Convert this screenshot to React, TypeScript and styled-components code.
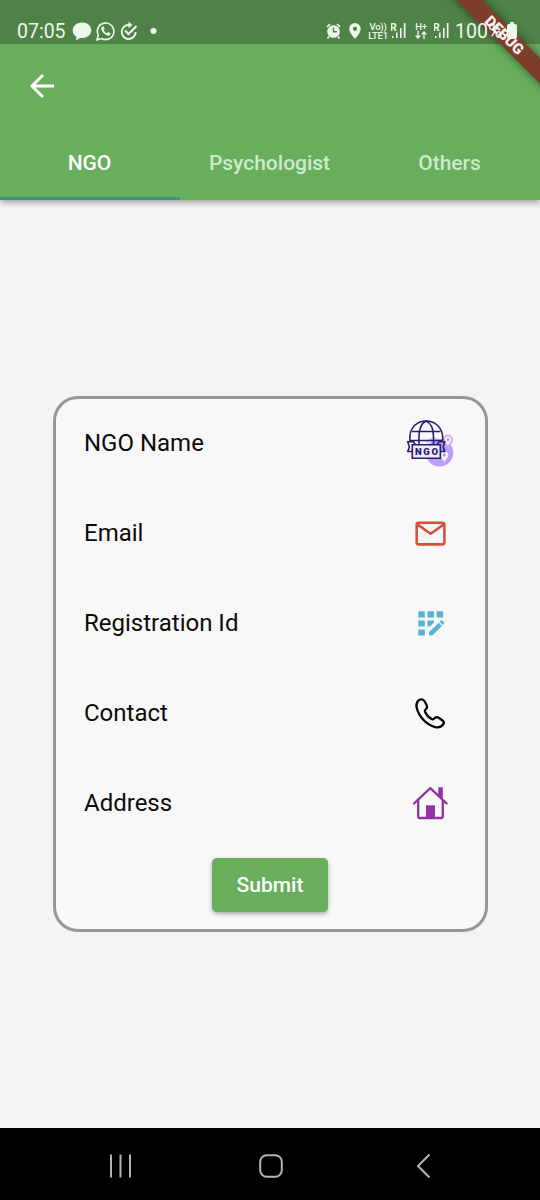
import React from "react";
import styled, { createGlobalStyle } from "styled-components";

const Global = createGlobalStyle`
  *{box-sizing:border-box}
  body{margin:0;background:#f4f4f4;font-family:Roboto,"Liberation Sans",sans-serif}
  svg{display:block;flex:none}
`;
const Screen = styled.div`
  position:relative;width:540px;height:1200px;overflow:hidden;
  display:flex;flex-direction:column;background:#f4f4f4;
`;
const Header = styled.header`
  height:200px;flex:none;background:#68ae5d;display:flex;flex-direction:column;
  box-shadow:0 3px 6px rgba(0,0,0,.32);
`;
const StatusBar = styled.div`
  height:44px;flex:none;background:#4e8246;display:flex;justify-content:space-between;
  align-items:flex-start;padding:19px 23px 0 17px;color:#eef7ec;
`;
const StatusGroup = styled.div`
  position:relative;z-index:2;display:flex;align-items:center;height:23px;
`;
const Clock = styled.span`
  font-size:19.5px;width:55px;line-height:23px;padding-top:1px;
`;
const Percent = styled.span`
  font-size:19.5px;line-height:23px;width:51px;white-space:nowrap;padding-top:1px;
  margin-left:-1px;margin-right:1px;
`;
const Glyph = styled.span<{ $gap: number }>`
  margin-right:${p => p.$gap}px;
`;
const Stack = styled.span<{ $w: number; $gap: number }>`
  width:${p => p.$w}px;margin-right:${p => p.$gap}px;white-space:nowrap;
  display:flex;flex-direction:column;align-items:center;
  font-size:9.5px;line-height:9px;font-weight:500;letter-spacing:-.2px;
`;
const AppBar = styled.div`
  height:84px;padding:26px 0 0 26px;
`;
const Tabs = styled.nav`
  display:grid;grid-template-columns:repeat(3,1fr);height:72px;
`;
const Tab = styled.div<{ $active?: boolean }>`
  display:flex;align-items:center;justify-content:center;
  font-size:21px;font-weight:500;padding-right:1px;
  color:${p => (p.$active ? "#fff" : "#cdebc8")};
  border-bottom:3px solid ${p => (p.$active ? "#439282" : "transparent")};
`;
const Banner = styled.div`
  position:absolute;z-index:1;left:404px;top:26px;width:200px;height:18px;
  transform:rotate(45deg);background:#7f3d2b;
  box-shadow:0 0 9px rgba(0,0,0,.5);
  color:#f7f0ee;font-size:15px;font-weight:900;line-height:18px;text-align:center;
  padding-left:1px;
`;
const Main = styled.main`
  flex:1;display:flex;align-items:center;justify-content:center;
`;
const Card = styled.form`
  width:435px;height:536px;border:3px solid #979797;border-radius:25px;
  background:#f8f8f8;display:flex;flex-direction:column;align-items:center;
`;
const Field = styled.div`
  width:394px;height:72px;margin:9px 0;padding:0 11px 2px 11px;flex:none;
  border:2px solid #fafafa;border-radius:4px;
  display:flex;justify-content:space-between;align-items:center;
`;
const Label = styled.span`
  font-size:24px;line-height:28px;color:#0b0b0b;margin-left:-2px;
`;
const IconBox = styled.span`
  width:48px;height:48px;flex:none;
`;
const Submit = styled.button`
  width:116px;height:54px;margin-top:8.500px;border:0;border-radius:5px;background:#68ae5d;
  color:#fff;font:500 21px Roboto,sans-serif;padding:0;
  box-shadow:0 2px 4px rgba(0,0,0,.32);
`;
const NavBar = styled.footer`
  height:72px;flex:none;background:#000;display:grid;
  grid-template-columns:151px 157px 1fr;align-items:center;padding:3px 0 0 108px;
`;

const Signal = () => (
  <svg width="17" height="18" viewBox="0 0 17 18">
    <text x="-1" y="8.500" fontSize="10.500" fontWeight="700" fill="currentColor">R</text>
    <g fill="currentColor">
      <rect x="1" y="14" width="1.500" height="2" />
      <rect x="5" y="10.500" width="1.600" height="5.500" />
      <rect x="9" y="6" width="1.600" height="10" />
      <rect x="12.800" y="1" width="1.700" height="15" />
    </g>
  </svg>
);

const NgoIcon = () => (
  <svg width="48" height="48" viewBox="0 0 48 48" fill="none">
    <circle cx="33.500" cy="33.700" r="13.800" fill="#bd9df5" />
    <path d="M21 24a7 7 0 0 1 11-3" stroke="#d3bff8" strokeWidth="2" />
    <path d="M42 27.500c-2.500-3-4.200-4.700-4.200-6.800a4.200 4.200 0 0 1 8.400 0c0 2.100-1.700 3.800-4.200 6.800Z" fill="#f6f1fd" stroke="#c9b0f6" strokeWidth="1.800" />
    <path d="M38.200 43c-2.500-3.500-4-5-4-7a4 4 0 0 1 8 0c0 2-1.500 3.500-4 7Z" fill="#f6f1fd" />
    <circle cx="42" cy="20.700" r="1.400" fill="#b28cf2" />
    <circle cx="38.200" cy="36" r="1.500" fill="#b28cf2" />
    <g stroke="#25216f" strokeWidth="1.600">
      <path d="M3.800 23v-5C4.300 8 11.500 2 20 2s16.200 6 16.700 16v5" />
      <path d="M13 25v-7c0-8 3-14 7-16 5 2 7.500 8 7.500 16v7M6 12.500h28.500M3.800 21.500h33" />
      <path d="M6 32.500H1.800l1.500-4.500-1.500-5.200h5.700l2 3M34.500 32.500h4.200L37.200 28l1.500-5.200H33l-2 3" />
      <path d="M6.300 25.800h28v13.400h-28z" fill="#f0eafa" />
    </g>
    <text x="9" y="35.900" fontSize="9.500" fontWeight="900" textLength="23" lengthAdjust="spacing" fill="#25216f">NGO</text>
  </svg>
);
const MailIcon = () => (
  <svg width="48" height="48" viewBox="0 0 48 48" fill="none" stroke="#d94f3d" strokeWidth="2.600" strokeLinejoin="round">
    <rect x="10.700" y="13.700" width="27.700" height="21.700" rx="1.800" />
    <path d="m11.400 15.400 13.200 9.300 13.300-9.300" />
  </svg>
);
const RegistrationIcon = () => (
  <svg width="48" height="48" viewBox="0 0 48 48" fill="#55b5cf">
    <path d="M12.300 12.300h6.500v6.200h-6.500zM21.500 12.300H28v6.200h-6.500zM30.600 12.300h6.500v6.200h-6.500zM12.300 21.400h6.500v6.200h-6.500zM12.300 30.400h6.500v6.200h-6.500zM21.500 21.400H28v2l-4 4.200h-2.500z" />
    <path d="M23 36.500v-3.200l9.700-9.600 3.200 3.200-9.700 9.600zM33.600 22.800l1.200-1.200q.7-.7 1.400 0l1.700 1.700q.7.700 0 1.400l-1.200 1.200z" />
  </svg>
);
const PhoneIcon = () => (
  <svg width="48" height="48" viewBox="0 0 48 48" fill="none" stroke="#050505" strokeWidth="2.300" strokeLinejoin="round">
    <path transform="translate(-.3 1)" d="M12.500 10.700c-1.500 1.700-2.200 4.300-1.500 7 2 8.500 9.500 17 18.500 19.400 3.500.8 6.300-.4 8.100-2.800 1-1.400.700-2.700-.6-3.700-2-1.500-3.300-2.600-5-3.200-1.600-.5-2.700 0-3.600 1.100-.8.900-1.500 1.200-2.500.6-3.300-1.900-5.400-4.500-6.600-7.500-.4-1.100 0-1.700.9-2.400 1.200-1 1.400-2.100.9-3.500-.6-1.900-1.600-3.500-2.600-4.900-1.500-1.900-4.200-2.100-6-.1Z" />
  </svg>
);
const HomeIcon = () => (
  <svg width="48" height="48" viewBox="0 0 48 48" fill="none" stroke="#9130a8" strokeWidth="2.300">
    <path d="M8 24.500 24.300 9.200l16.300 15.300" strokeLinecap="round" strokeLinejoin="round" />
    <path d="M12.200 21v16.700q0 1.300 1.300 1.300h22q1.300 0 1.300-1.300V21" />
    <path d="M32.300 8.300h4.500V20l-4.500-4.500z" fill="#9130a8" stroke="none" />
    <path d="M20 26.300h9v12h-9z" fill="#9130a8" stroke="none" />
  </svg>
);

const fields = [
  { label: "NGO Name", Icon: NgoIcon },
  { label: "Email", Icon: MailIcon },
  { label: "Registration Id", Icon: RegistrationIcon },
  { label: "Contact", Icon: PhoneIcon },
  { label: "Address", Icon: HomeIcon },
];

export default function App() {
  return (
    <Screen>
      <Global />
      <Header>
        <StatusBar>
          <StatusGroup>
            <Clock>07:05</Clock>
            <Glyph $gap={4}>
              <svg width="20" height="20" viewBox="0 0 20 20" fill="currentColor">
                <path d="M10 1.500c5.200 0 9.300 3.400 9.300 7.800s-4.100 7.800-9.300 7.800c-.8 0-1.500-.1-2.200-.2-1 .9-2.400 2-4.200 2.300.6-.9.900-2.300.7-3.500C2 14.300.7 12 .7 9.300c0-4.400 4.100-7.800 9.300-7.800Z" />
              </svg>
            </Glyph>
            <Glyph $gap={5}>
              <svg width="19" height="20" viewBox="0 0 19 20" fill="none" stroke="currentColor" strokeWidth="1.600">
                <path d="m1 18.800 1.300-4.600a8.300 8.300 0 1 1 3.200 3.300Z" />
                <path d="M6.200 5.400c-1 .8-1.200 2-.6 3.500 1.200 2.900 3.300 4.900 6 5.600 1.700.4 2.900-.6 2.900-2.300l-2.400-1.300-1.300 1.300c-1.500-.6-2.600-1.700-3.200-3.200l1-1.200-1-2.400Z" fill="currentColor" stroke="none" />
              </svg>
            </Glyph>
            <Glyph $gap={11}>
              <svg width="18" height="20" viewBox="0 0 18 20" fill="none" stroke="currentColor" strokeWidth="2">
                <path d="M9.500 4A7 7 0 1 0 15.700 11" />
                <path d="m5 9.500 3.500 3.500 8-8" />
                <path d="m8.500 .500 4 3.500-4 3.300z" fill="currentColor" stroke="none" />
              </svg>
            </Glyph>
            <svg width="8" height="8" viewBox="0 0 8 8" fill="currentColor"><circle cx="4.500" cy="4" r="3" /></svg>
          </StatusGroup>
          <StatusGroup>
            <Glyph $gap={8}>
              <svg width="15" height="16" viewBox="0 0 15 16">
                <path d="m1 4 3-3M14 4l-3-3M3 13.500l-1.500 2M12 13.500l1.500 2" stroke="currentColor" strokeWidth="1.700" />
                <circle cx="7.500" cy="8.500" r="6.300" fill="currentColor" />
                <path d="M7.500 4.500v4.300h3.500" fill="none" stroke="#4e8246" strokeWidth="1.400" />
              </svg>
            </Glyph>
            <Glyph $gap={7}>
              <svg width="12" height="16" viewBox="0 0 12 16" fill="currentColor" fillRule="evenodd">
                <path d="M6 0a5.700 5.700 0 0 1 5.700 5.800C11.700 9.500 8.500 13 6 16 3.500 13 .3 9.500.3 5.800A5.700 5.700 0 0 1 6 0Zm0 3.700a2.100 2.100 0 1 0 0 4.200 2.100 2.100 0 0 0 0-4.200Z" />
              </svg>
            </Glyph>
            <Stack $w={20} $gap={3}><span>Vo))</span><span>LTE1</span></Stack>
            <Glyph $gap={6}><Signal /></Glyph>
            <Stack $w={14} $gap={6}>
              <span>H+</span>
              <svg width="12" height="8" viewBox="0 0 12 8" fill="none" stroke="currentColor" strokeWidth="1.300">
                <path d="M3 0v7M.7 4.500 3 7l2.300-2.500M9 8V1M6.700 3.500 9 1l2.300 2.500" />
              </svg>
            </Stack>
            <Glyph $gap={5}><Signal /></Glyph>
            <Percent>100%</Percent>
            <svg width="10" height="17" viewBox="0 0 10 17" fill="currentColor">
              <path d="M3 0h4v2h1a2 2 0 0 1 2 2v11a2 2 0 0 1-2 2H2a2 2 0 0 1-2-2V4a2 2 0 0 1 2-2h1z" />
            </svg>
          </StatusGroup>
        </StatusBar>
        <AppBar>
          <svg width="32" height="32" viewBox="0 0 32 32" fill="none" stroke="#fff" strokeWidth="3">
            <path d="M28 16H6M17 5 6 16l11 11" />
          </svg>
        </AppBar>
        <Tabs>
          <Tab $active>NGO</Tab>
          <Tab>Psychologist</Tab>
          <Tab>Others</Tab>
        </Tabs>
      </Header>
      <Banner>DEBUG</Banner>
      <Main>
        <Card>
          {fields.map(({ label, Icon }) => (
            <Field key={label}>
              <Label>{label}</Label>
              <IconBox><Icon /></IconBox>
            </Field>
          ))}
          <Submit type="button">Submit</Submit>
        </Card>
      </Main>
      <NavBar>
        <svg width="24" height="26" viewBox="0 0 24 26" stroke="#b4b4b4" strokeWidth="2">
          <path d="M3 1.500v23M12.500 1.500v23M22 1.500v23" />
        </svg>
        <svg width="24" height="24" viewBox="0 0 24 24" fill="none" stroke="#b4b4b4" strokeWidth="2">
          <rect x="1.200" y="1.200" width="21.600" height="21.600" rx="6.500" />
        </svg>
        <svg width="15" height="26" viewBox="0 0 15 26" fill="none" stroke="#b4b4b4" strokeWidth="2">
          <path d="M13.500 1.500 2 13l11.500 11.500" />
        </svg>
      </NavBar>
    </Screen>
  );
}
